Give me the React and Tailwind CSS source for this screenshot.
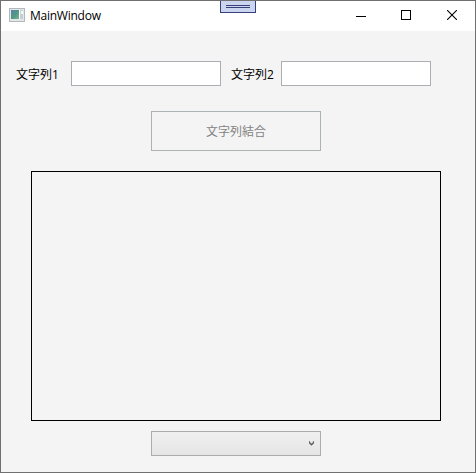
function AppIcon() {
  return (
    <svg className="mb-0.5" width="16" height="14" viewBox="0 0 16 14" shapeRendering="crispEdges" aria-hidden="true">
      <rect width="16" height="14" fill="#b4b8bd" />
      <rect x="1" y="1" width="14" height="12" fill="#e4e7ea" />
      <rect x="2" y="2" width="8" height="9" fill="url(#pane)" />
      <rect x="10" y="2" width="1" height="9" fill="#fff" />
      <rect x="11" y="2" width="3" height="9" fill="#c3d2d0" />
      <rect x="12" y="3" width="2" height="3" fill="#f6faf7" />
      <defs>
        <linearGradient id="pane" x1="0" y1="0" x2="1" y2="1">
          <stop offset="0" stopColor="#5b82ae" />
          <stop offset="0.55" stopColor="#4f9a83" />
          <stop offset="1" stopColor="#7fb098" />
        </linearGradient>
      </defs>
    </svg>
  );
}

function TitleBar() {
  return (
    <header className="flex h-[30px] shrink-0 items-center bg-white pl-2">
      <AppIcon />
      <h1 className="ml-[5px] font-['Open_Sans','Noto_Sans',sans-serif] text-[12px] leading-4 tracking-[-0.25px] text-black">MainWindow</h1>
      <div className="ml-auto flex h-full">
        <button className="flex w-11 items-center justify-center" aria-label="Minimize">
          <svg width="10" height="10" shapeRendering="crispEdges"><rect y="5" width="10" height="1" /></svg>
        </button>
        <button className="flex w-[46px] items-center justify-center" aria-label="Maximize">
          <svg className="mb-0.5" width="10" height="10" shapeRendering="crispEdges"><rect x=".5" y=".5" width="9" height="9" fill="none" stroke="#000" /></svg>
        </button>
        <button className="flex w-[46px] items-center justify-center" aria-label="Close">
          <svg className="mb-0.5" width="10" height="10"><path d="M0 0L10 10M10 0L0 10" stroke="#000" strokeWidth="1.1" /></svg>
        </button>
      </div>
    </header>
  );
}

function Field({ label, id, labelWidth }) {
  return (
    <div className="flex items-center">
      <label htmlFor={id} className={`${labelWidth} pt-0.5 text-[12px] leading-4 text-black`}>{label}</label>
      <input id={id} className="h-[25px] w-[150px] border border-[#abadb3] bg-white px-1 outline-none" />
    </div>
  );
}

export default function App() {
  return (
    <div className="relative flex h-[473px] w-[476px] flex-col overflow-hidden border border-[#707070] bg-[#f4f4f4] font-['Open_Sans','Noto_Sans_CJK_JP',sans-serif]">
      <TitleBar />
      <div className="absolute -top-px left-[219px] flex h-[13px] w-9 flex-col items-center gap-px border border-[#36417a] bg-[#ccd5f0] pt-1">
        <span className="h-px w-6 bg-[#36417a]" />
        <span className="h-px w-6 bg-[#36417a]" />
      </div>
      <main className="flex flex-col items-start">
        <div className="mt-[30px] ml-[15px] flex gap-2.5">
          <Field id="first" label="文字列1" labelWidth="w-[55px]" />
          <Field id="second" label="文字列2" labelWidth="w-[50px]" />
        </div>
        <button disabled className="mt-[25px] ml-[150px] h-10 w-[170px] border border-[#adb2b5] bg-[#f4f4f4] pt-0.5 text-[12px] text-[#838383]">文字列結合</button>
        <div className="mt-5 ml-[30px] h-[250px] w-[410px] border border-black" />
        <button aria-label="Select" className="mt-2.5 ml-[150px] flex h-[25px] w-[170px] items-center justify-end border border-[#acacac] bg-linear-to-b from-[#f0f0f0] to-[#e5e5e5] pr-1.5">
          <svg width="5" height="5" viewBox="0 0 5 5" className="mb-px"><path d="M.3 .3V1.5L2.5 3.7L4.7 1.5V.3" fill="none" stroke="#606060" strokeWidth="1.5" /></svg>
        </button>
      </main>
      <span className="absolute top-[125px] -left-px h-1.5 w-px bg-[#8d1015]" />
      <span className="absolute top-[208px] -left-px h-px w-px bg-[#26268b]" />
      <span className="absolute top-[211px] -left-px h-px w-px bg-[#26268b]" />
      <span className="absolute top-[214px] -left-px h-px w-px bg-[#26268b]" />
      <span className="absolute top-[223px] -left-px h-1.5 w-px bg-[#8d1015]" />
      <span className="absolute -top-px -left-px h-1.5 w-px bg-[#8d1015]" />
      <span className="absolute -top-px left-[332px] h-px w-[5px] bg-[#1f4a20]" />
      <span className="absolute -top-px left-[350px] h-px w-2 bg-[#4a4a60]" />
      <span className="absolute -top-px left-[449px] h-px w-[5px] bg-[#1f4a20]" />
      <span className="absolute -bottom-px left-[350px] h-px w-2 bg-[#3c3c46]" />
      <span className="absolute -bottom-px left-[377px] h-px w-[9px] bg-[#174555]" />
      <span className="absolute -bottom-px left-[458px] h-px w-[5px] bg-[#333]" />
    </div>
  );
}
